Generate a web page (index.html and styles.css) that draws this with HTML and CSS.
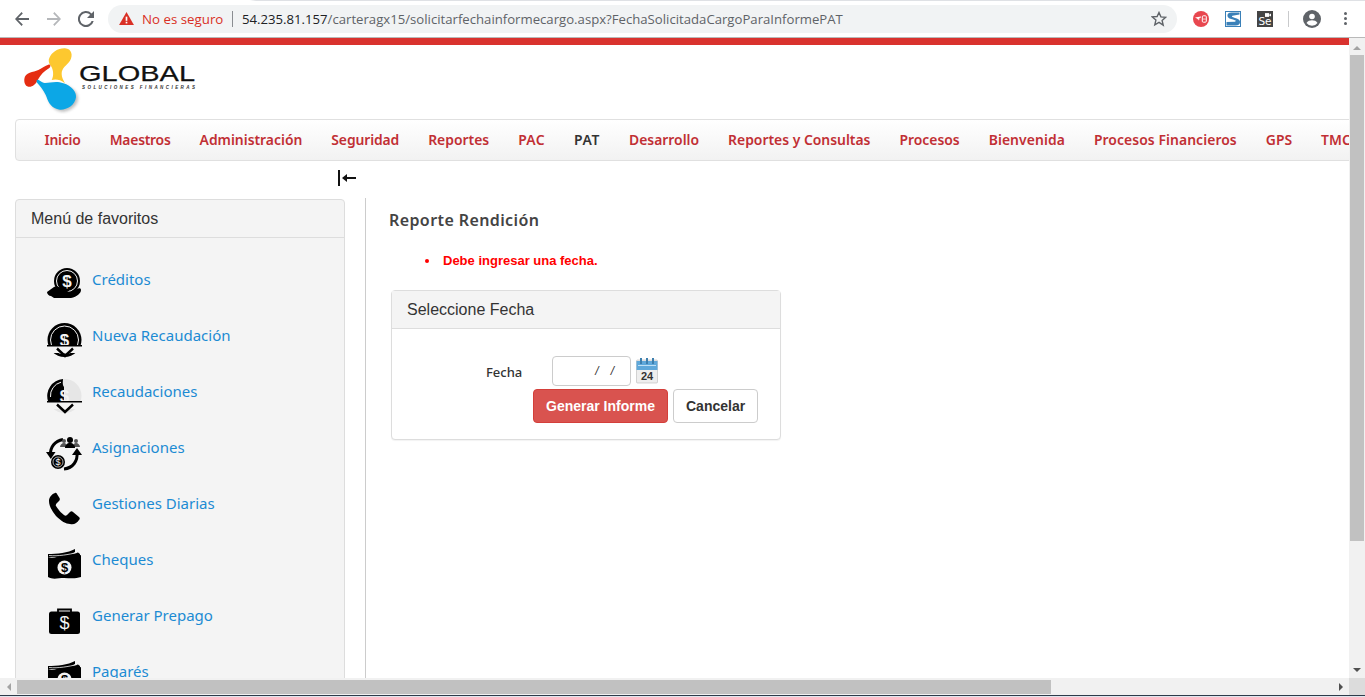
FILE: index.html
```html
<!DOCTYPE html>
<html lang="es">
<head>
<meta charset="utf-8">
<title>Reporte Rendición</title>
<link rel="stylesheet" href="styles.css">
</head>
<body>
<div class="browser">
  <div class="tabedge"></div>
  <header class="toolbar">
    <svg class="tb-ic back" viewBox="0 0 16 16"><path d="M15 7H4.200l4.600-4.600L7.600 1 1 8l6.600 7 1.200-1.400L4.200 9H15z"/></svg>
    <svg class="tb-ic fwd" viewBox="0 0 16 16"><path d="M1 7h10.800L7.200 2.400 8.400 1 15 8l-6.600 7-1.200-1.400L11.800 9H1z"/></svg>
    <svg class="tb-ic reload" viewBox="0 0 16 16"><path d="M13.600 2.400A8 8 0 1 0 15.700 10h-2.100a6 6 0 1 1-1.400-6.200L9 7h7V0z"/></svg>
    <div class="omnibox">
      <svg class="warn" viewBox="0 0 16 14"><path d="M8 0l8 14H0z"/><rect class="warn-mark" x="7.100" y="5" width="1.800" height="4.500"/><rect class="warn-mark" x="7.100" y="10.500" width="1.800" height="1.800"/></svg>
      <span class="insecure">No es seguro</span>
      <span class="omni-sep"></span>
      <span class="url"><span class="host">54.235.81.157</span>/carteragx15/solicitarfechainformecargo.aspx?FechaSolicitadaCargoParaInformePAT</span>
      <svg class="star" viewBox="0 0 16 16"><path d="M8 1.500l1.900 4.400 4.800.4-3.600 3.200 1.100 4.700L8 11.300l-4.200 2.500 1.100-4.700-3.600-3.200 4.800-.4z"/></svg>
    </div>
    <div class="extensions">
      <svg class="ext" viewBox="0 0 16 16"><circle class="e-red" cx="8" cy="8" r="8"/><path class="e-white" d="M2 6.500l6-1v1l-2.500.8L7.500 8l-2 .4.800 1.600-2-2.200z"/><rect class="e-outline" x="9.300" y="4.800" width="4" height="6.400" rx="1"/><rect class="e-white" x="9.800" y="7.700" width="3" height=".7"/></svg>
      <svg class="ext" viewBox="0 0 16 16"><rect class="e-blue" width="16" height="16"/><rect class="e-white" x="1" y="1" width="14" height="14"/><path class="e-blue" d="M14.500 3.500v-2H6.500C3.500 1.500 2 3 2.500 5.300c.5 2 3 2.700 5.500 3.200l3 1.300-1 1-8.500.2v3.500h9c3 0 4.800-1.600 4.500-4-.3-2-2.500-3-5-3.500L7.500 6c-.7-.3-.7-1 0-1.200z"/></svg>
      <div class="ext se"><svg class="se-cam" viewBox="0 0 8 5"><rect width="5.500" height="5"/><path d="M5.500 2L8 .5v4L5.500 3z"/></svg><span>Se</span></div>
      <span class="ext-sep"></span>
      <svg class="avatar" viewBox="0 0 18 18"><circle class="av-bg" cx="9" cy="9" r="9"/><circle class="av-fg" cx="9" cy="6.500" r="2.800"/><path class="av-fg" d="M3.500 13c1-2 3.500-2.700 5.500-2.700s4.500.7 5.500 2.700A7 7 0 0 1 9 15.800 7 7 0 0 1 3.500 13z"/></svg>
      <div class="kebab"><i></i><i></i><i></i></div>
    </div>
  </header>

  <div class="viewport">
    <div class="page">
      <div class="redbar"></div>
      <div class="brand">
        <svg class="logo" viewBox="0 0 176 66">
          <defs><filter id="sh" x="-20%" y="-20%" width="150%" height="150%"><feGaussianBlur stdDeviation="5"/></filter></defs>
          <g transform="scale(.3333) translate(0 -12)">
            <path class="lg-shadow" filter="url(#sh)" d="M60 118 C70 124 105 114 135 124 C160 131 176 150 174 166 C171 190 146 204 126 203 C101 201 91 181 86 166 C81 151 68 134 60 118z"/>
            <path class="lg-yellow" d="M88 42C95 25 115 12 135 13C155 14 160 35 150 50C140 65 125 70 125 90C125 100 130 108 135 118C120 105 105 105 95 108C103 95 100 72 90 62C86 56 85 48 88 42z"/>
            <path class="lg-red" d="M13 105C15 85 40 85 55 78C67 72 75 65 85 62C92 60 93 68 88 72C72 82 62 92 55 105C48 122 35 130 25 128C15 126 12 115 13 105z"/>
            <path class="lg-blue" d="M50 108C55 105 60 112 70 116C85 120 105 108 130 118C155 125 170 145 168 160C165 185 140 198 120 197C95 195 85 175 80 160C75 145 62 128 50 115z"/>
          </g>
          <text class="lg-name" x="59" y="33" textLength="116" lengthAdjust="spacingAndGlyphs">GLOBAL</text>
          <text class="lg-sub" x="62" y="41" textLength="113" lengthAdjust="spacing">SOLUCIONES FINANCIERAS</text>
        </svg>
      </div>
      <nav class="mainnav">
        <a class="tight">Inicio</a><a class="tighter">Maestros</a><a>Administración</a><a class="snug">Seguridad</a><a>Reportes</a><a class="wide">PAC</a><a class="active wider">PAT</a><a>Desarrollo</a><a>Reportes y Consultas</a><a>Procesos</a><a class="open">Bienvenida</a><a class="open">Procesos Financieros</a><a>GPS</a><a>TMC</a>
      </nav>
      <div class="togglerow">
        <svg class="collapse" viewBox="0 0 18 16"><rect x="0" y="0" width="2" height="16"/><path d="M4 8l5-4v3h9v2H9v3z"/></svg>
      </div>
      <div class="columns">
        <aside class="favs">
          <div class="favs-head">Menú de favoritos</div>
          <ul class="favs-list">
            <li><svg class="fav-ic" viewBox="0 0 36 40">
              <circle cx="21" cy="14" r="13"/><circle class="lt-s" cx="21" cy="14" r="10.500"/><text class="dollar" x="21" y="20">$</text>
              <path d="M1 25l7-5c3-1 5 0 8 1l6 1c2 1 1 3-2 3h-3v1h6l8-4c2-1 4-1 4 1 0 3-4 7-10 8H8l-3-2c-2 0-4-2-4-4z"/>
            </svg><a>Créditos</a></li>
            <li><svg class="fav-ic" viewBox="0 0 36 40">
              <circle cx="18.500" cy="17" r="17"/><circle class="lt-s" cx="18.500" cy="17" r="14"/><text class="dollar" x="18.500" y="23">$</text>
              <rect class="cut" y="22" width="36" height="8"/><rect x="1" y="22" width="35" height="1.500"/><path class="chev" d="M11 25.500l8 7.500 8-7.500"/>
            </svg><a>Nueva Recaudación</a></li>
            <li><svg class="fav-ic" viewBox="0 0 36 40">
              <circle class="ghost" cx="18.500" cy="17" r="17"/><path d="M17 0A17 17 0 0 0 2 22h16V8c-2-3-1-6-1-8z"/><path class="lt-s" d="M15 3.200A14 14 0 0 0 4.500 18"/><text class="dollar" x="18.500" y="23">$</text>
              <rect class="cut" y="22" width="36" height="8"/><rect x="1" y="22" width="35" height="1.500"/><path class="chev" d="M11 25.500l8 7.500 8-7.500"/>
            </svg><a>Recaudaciones</a></li>
            <li><svg class="fav-ic" viewBox="0 0 36 40">
              <path class="ring" d="M4.500 20C4 12 9 6 17 4.500"/><path d="M0 17h9.500l-4.700 7z"/>
              <path class="ring" d="M31 17c1 9-4 16-13 17"/><path d="M26 20h10l-5-7z"/>
              <circle class="ghost2" cx="30" cy="6" r="2"/><circle class="ghost2" cx="18" cy="6" r="2"/><path class="ghost2" d="M27 12c0-2 1-4 3-4s4 2 4 4zM14 12c0-2 2-4 4-4s3 2 3 4z"/>
              <circle cx="24" cy="5" r="3"/><path d="M19 13c0-3 2-5 5-5s5 2 5 5z"/>
              <circle cx="12" cy="27" r="7"/><circle class="lt-s thin" cx="12" cy="27" r="5"/><text class="dollar small" x="12" y="30">$</text>
            </svg><a>Asignaciones</a></li>
            <li><svg class="fav-ic" viewBox="0 0 36 40">
              <path d="M9 2c-3 1-6 4-6 8 0 5 3 10 7 15 5 5 10 8 14 8 4 1 7-1 9-4 1-1 1-2 0-3l-6-5c-1-1-2-1-3 0l-3 3c-1 1-2 1-3 0-3-2-6-6-8-9-.6-1 0-2 1-3l2-2c1-1 1-2 .5-3L11 3c-.5-1-1-1.500-2-1z"/>
            </svg><a>Gestiones Diarias</a></li>
            <li><svg class="fav-ic" viewBox="0 0 36 40">
              <path d="M2 7c9 0 20-1 27-5v3l-3 2 6-1.500 2 1.500v3H2z"/><path class="stripe" d="M3 8.500c9 1 20-1 28-3"/><path d="M2 10c5 2 10-1 16-1s10 2 17-1v22c-6 2-11 1-17 1S7 33 2 30z"/><circle class="lt-f" cx="18.500" cy="20.500" r="7"/><text class="dollar dark" x="18.500" y="25">$</text>
            </svg><a>Cheques</a></li>
            <li><svg class="fav-ic" viewBox="0 0 36 40">
              <path class="handle" d="M12 9V6.500h13V9"/><rect x="3" y="8.500" width="31" height="22.500" rx="2.500"/><text class="dollar big" x="18.500" y="26">$</text>
            </svg><a>Generar Prepago</a></li>
            <li><svg class="fav-ic" viewBox="0 0 36 40">
              <path d="M2 7c9 0 20-1 27-5v3l-3 2 6-1.500 2 1.500v3H2z"/><path class="stripe" d="M3 8.500c9 1 20-1 28-3"/><path d="M2 10c5 2 10-1 16-1s10 2 17-1v22c-6 2-11 1-17 1S7 33 2 30z"/><circle class="lt-f" cx="18.500" cy="20.500" r="7"/><text class="dollar dark" x="18.500" y="25">$</text>
            </svg><a>Pagarés</a></li>
          </ul>
        </aside>
        <main class="content">
          <h1 class="title">Reporte Rendición</h1>
          <ul class="errors"><li>Debe ingresar una fecha.</li></ul>
          <section class="card">
            <div class="card-head">Seleccione Fecha</div>
            <div class="card-body">
              <div class="field">
                <label class="field-label">Fecha</label>
                <div class="dateinput"><span>/</span><span>/</span></div>
                <svg class="cal" viewBox="0 0 22 26">
                  <rect class="cal-page" x="0.500" y="2" width="21" height="23" rx="1"/>
                  <rect class="cal-top" x="0.500" y="3" width="21" height="9"/>
                  <rect class="cal-ring" x="4" y="0" width="2" height="6"/><rect class="cal-ring" x="10" y="0" width="2" height="6"/><rect class="cal-ring" x="16" y="0" width="2" height="6"/>
                  <rect class="cal-line" x="2" y="7" width="18" height="1"/>
                  <text class="cal-num" x="11" y="22">24</text>
                </svg>
              </div>
              <div class="actions">
                <button class="btn btn-danger">Generar Informe</button>
                <button class="btn btn-default">Cancelar</button>
              </div>
            </div>
          </section>
        </main>
      </div>
    </div>
    <div class="vbar">
      <div class="v-top"><i class="ar ar-up"></i></div>
      <div class="v-thumb"></div>
      <div class="v-fill"></div>
      <div class="v-bot"><i class="ar ar-down"></i></div>
    </div>
    <div class="hbar">
      <div class="h-end"><i class="ar ar-left"></i></div>
      <div class="h-thumb"></div>
      <div class="h-fill"></div>
      <div class="h-end"><i class="ar ar-right"></i></div>
    </div>
    <div class="corner"></div>
  </div>
  <div class="bottomstrip"></div>
</div>
</body>
</html>
```
FILE: styles.css
```css
* { box-sizing: border-box; }
html, body { margin: 0; padding: 0; height: 100%; overflow: hidden; background: #fff; }
.browser { width: 1365px; height: 697px; display: flex; flex-direction: column; overflow: hidden; font-family: "Liberation Sans", Arial, sans-serif; }
.tabedge { height: 1px; flex: none; background: linear-gradient(90deg, #fff 0, #fff 250px, #dfe1e5 256px); }

/* browser toolbar */
.toolbar { height: 37px; flex: none; display: flex; align-items: center; padding-bottom: 1px; background: #fff; border-bottom: 1px solid #b9b9b9; }
.tb-ic { width: 16px; height: 16px; flex: none; fill: #5f6368; }
.back { margin-left: 14px; }
.fwd { margin-left: 16px; fill: #b5b7ba; }
.reload { margin-left: 16px; }
.omnibox { width: 1069px; height: 28px; margin-left: 14px; flex: none; display: flex; align-items: center; border-radius: 14px; background: #f1f3f4; padding-left: 11px; font-family: "Open Sans", "Noto Sans", sans-serif; font-size: 13.300px; }
.warn { width: 15px; height: 13px; flex: none; fill: #d93025; }
.warn .warn-mark { fill: #fff; }
.insecure { color: #d93025; margin-left: 8px; white-space: nowrap; width: 82px; }
.omni-sep { width: 1px; height: 16px; background: #8a8d91; margin-left: 8px; }
.url { margin-left: 9px; color: #5f6368; white-space: nowrap; font-size: 13.160px; width: 909px; overflow: hidden; }
.host { color: #202124; }
.star { width: 16px; height: 16px; flex: none; fill: none; stroke: #5f6368; stroke-width: 1.400; }
.extensions { display: flex; align-items: center; margin-left: 16px; }
.ext { width: 16px; height: 16px; flex: none; margin-right: 16px; }
.e-red { fill: #e8474f; }
.e-white { fill: #fff; }
.e-outline { fill: none; stroke: #fff; stroke-width: 1; }
.e-blue { fill: #3a80b8; }
.se { background: #444; color: #fff; font-size: 10.500px; line-height: 10px; position: relative; display: flex; align-items: flex-end; justify-content: center; padding-bottom: 1px; font-family: "DejaVu Sans", sans-serif; }
.se-cam { position: absolute; top: 2px; right: 2px; width: 6px; height: 4px; fill: #fff; }
.ext-sep { width: 1px; height: 16px; background: #c9cacc; margin-left: -1px; margin-right: 14px; }
.avatar { width: 18px; height: 18px; flex: none; }
.av-bg { fill: #5f6368; }
.av-fg { fill: #fff; }
.kebab { display: flex; flex-direction: column; gap: 2px; margin-left: 23px; }
.kebab i { width: 3px; height: 3px; background: #5f6368; border-radius: 50%; display: block; }

/* viewport */
.viewport { flex: 1; min-height: 0; display: grid; grid-template-columns: 1349px 16px; grid-template-rows: 640px 17px; }
.page { overflow: hidden; background: #fff; color: #333; }
.redbar { height: 7px; background: #d9322e; }
.brand { height: 74px; padding: 3px 0 0 20px; }
.logo { display: block; width: 176px; height: 66px; }
.lg-shadow { fill: #8a8a8a; opacity: .55; }
.lg-yellow { fill: #fdc82f; }
.lg-red { fill: #e52d12; }
.lg-blue { fill: #0ca7e6; }
.lg-name { font-family: "Liberation Sans", sans-serif; font-size: 22.300px; fill: #111; stroke: #111; stroke-width: .25; }
.lg-sub { font-family: "Liberation Sans", sans-serif; font-size: 4.500px; font-weight: 700; font-style: italic; fill: #333; }

.mainnav { height: 42px; margin-left: 15px; width: 1500px; display: flex; align-items: center; padding: 0 0 2px 14px; border: 1px solid #e0e0e0; border-radius: 4px; background: linear-gradient(#ffffff, #f2f2f2); font-family: "Noto Sans", sans-serif; font-weight: 600; font-size: 13.900px; white-space: nowrap; }
.mainnav a { color: #c12f34; padding: 0 14.500px; }
.mainnav a.active { color: #333; }
.mainnav .tight { letter-spacing: -.2px; }
.mainnav .tighter { letter-spacing: -.25px; }
.mainnav .snug { letter-spacing: -.11px; }
.mainnav .open { letter-spacing: .08px; }
.mainnav .wide { letter-spacing: .33px; }
.mainnav .wider { letter-spacing: .67px; }

.togglerow { height: 38px; display: flex; padding: 9px 0 0 338px; }
.collapse { width: 18px; height: 16px; fill: #111; }

.columns { display: flex; align-items: flex-start; }
.favs { width: 330px; margin-left: 15px; flex: none; background: #f4f4f4; border: 1px solid #ddd; border-radius: 4px; }
.favs-head { height: 38px; padding-left: 15px; display: flex; align-items: center; font-size: 16px; color: #333; border-bottom: 1px solid #ddd; }
.favs-list { list-style: none; margin: 0; padding: 24px 0 0 30px; }
.favs-list li { height: 56px; display: flex; gap: 10px; padding-top: 5px; }
.favs-list a { font-family: "Noto Sans", sans-serif; font-size: 15px; line-height: 24px; height: 26px; color: #1c8bd3; }
.fav-ic { width: 36px; height: 40px; flex: none; fill: #000; }
.lt-s { fill: none; stroke: #f4f4f4; stroke-width: 1; }
.lt-s.thin { stroke-width: .7; }
.lt-f { fill: #f4f4f4; }
.dollar { fill: #f4f4f4; font-family: "Liberation Sans", sans-serif; font-size: 17px; font-weight: 700; text-anchor: middle; }
.dollar.small { font-size: 9px; font-weight: 400; }
.dollar.dark { fill: #000; font-size: 13px; }
.dollar.big { font-size: 18px; font-weight: 400; }
.cut { fill: #f4f4f4; }
.chev { fill: none; stroke: #000; stroke-width: 2.400; }
.ghost { fill: #e6e6e6; }
.ghost2 { fill: #555; }
.ring { fill: none; stroke: #000; stroke-width: 3; }
.handle { fill: none; stroke: #000; stroke-width: 1.800; }
.stripe { fill: none; stroke: #f4f4f4; stroke-width: .8; }

.content { margin-left: 20px; flex: 1; height: 520px; margin-top: -1px; border-left: 1px solid #ccc; padding-left: 23px; }
.title { margin: 12px 0 0; font-family: "Noto Sans", sans-serif; font-size: 16px; letter-spacing: .4px; line-height: 20px; font-weight: 600; color: #444; }
.errors { margin: 22px 0 0; padding: 0; color: #f00; font-size: 13px; line-height: 18px; font-weight: 700; list-style: none; }
.errors li { display: flex; align-items: center; gap: 14px; padding-left: 36px; }
.errors li::before { content: ""; width: 4px; height: 4px; border-radius: 50%; background: #f00; flex: none; }
.card { width: 390px; margin: 20px 0 0 2px; background: #fff; border: 1px solid #ddd; border-radius: 4px; box-shadow: 0 1px 1px rgba(0,0,0,.05); }
.card-head { height: 38px; padding-left: 15px; display: flex; align-items: center; font-size: 16px; color: #333; background: #f4f4f4; border-bottom: 1px solid #ddd; }
.card-body { padding: 27px 22px 16px 0; }
.field { display: flex; align-items: center; height: 30px; padding-left: 94px; }
.field-label { width: 66px; margin-top: 2px; font-family: "Noto Sans", sans-serif; font-size: 13px; font-weight: 500; color: #333; }
.dateinput { width: 79px; height: 30px; display: flex; justify-content: flex-end; gap: 12px; align-items: center; padding-right: 16px; border: 1px solid #ccc; border-radius: 4px; font-size: 12px; font-style: italic; color: #333; }
.cal { width: 22px; height: 26px; margin-left: 5px; }
.cal-page { fill: #eee; stroke: #bbb; stroke-width: .6; }
.cal-top { fill: #5fa8da; }
.cal-ring { fill: #3d7fae; }
.cal-line { fill: #bfe0f5; }
.cal-num { font-family: "Liberation Sans", sans-serif; font-size: 11px; font-weight: 700; fill: #333; text-anchor: middle; }
.actions { display: flex; justify-content: flex-end; gap: 5px; margin-top: 3px; }
.btn { height: 34px; padding: 0 12px; border-radius: 4px; font-family: "Liberation Sans", sans-serif; font-size: 14px; font-weight: 700; }
.btn-danger { width: 135px; background: #d9534f; border: 1px solid #d43f3a; color: #fff; }
.btn-default { width: 85px; background: #fff; border: 1px solid #ccc; color: #333; }

/* scrollbars */
.vbar { background: #f1f1f1; display: flex; flex-direction: column; align-items: center; }
.v-top { height: 17px; flex: none; display: flex; align-items: center; justify-content: center; padding-top: 2px; }
.v-thumb { width: 14px; height: 486px; flex: none; background: #c1c1c1; }
.v-fill { flex: 1; }
.v-bot { height: 17px; flex: none; display: flex; align-items: center; justify-content: center; }
.hbar { background: #f1f1f1; display: flex; align-items: center; }
.h-end { width: 17px; height: 17px; flex: none; display: flex; align-items: center; justify-content: center; }
.h-thumb { width: 1034px; height: 14px; flex: none; background: #c1c1c1; }
.h-fill { flex: 1; }
.corner { background: #dcdcdc; }
.ar { display: block; width: 0; height: 0; border-style: solid; border-color: transparent; }
.ar-up { border-width: 0 4px 4px; border-bottom-color: #a3a3a3; }
.ar-down { border-width: 4px 4px 0; border-top-color: #505050; }
.ar-left { border-width: 4px 4px 4px 0; border-right-color: #a3a3a3; }
.ar-right { border-width: 4px 0 4px 4px; border-left-color: #505050; }
.bottomstrip { height: 2px; flex: none; background: #dfe6ee; border-top: 1px solid #2f3b4a; }
```
